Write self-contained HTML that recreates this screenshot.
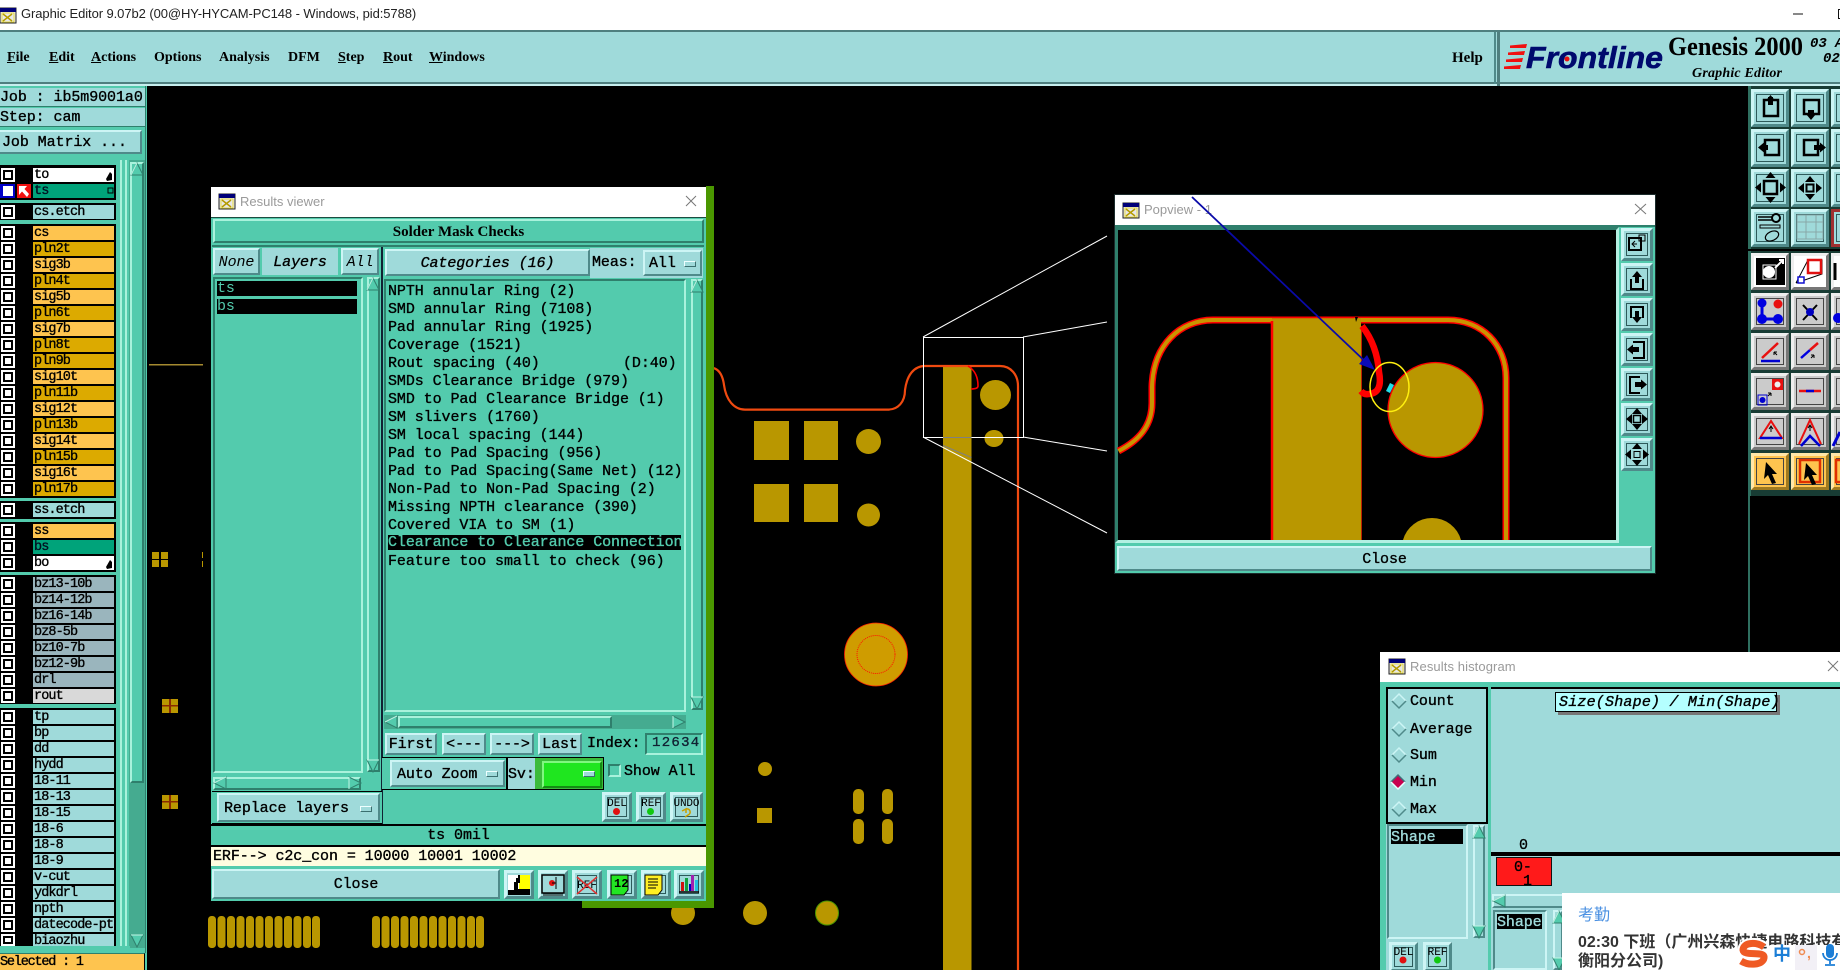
<!DOCTYPE html>
<html><head><meta charset="utf-8"><title>Graphic Editor</title>
<style>
html,body{margin:0;padding:0;background:#000;width:1840px;height:970px;overflow:hidden}
#p{position:relative;width:1840px;height:970px;overflow:hidden;background:#000}
#p div,#p svg{position:absolute;box-sizing:border-box}
svg{left:0;top:0}
.t,.n,.b,.f{font:15px/14px "Liberation Mono",monospace;letter-spacing:-.08px;white-space:pre;color:#000;-webkit-text-stroke:.35px}
.t{height:14px;padding-top:1px}
.nb{-webkit-text-stroke:0}
.i{font-style:italic}
.b,.f{display:flex;align-items:center;justify-content:center;padding-top:2px}
.b{background:#9fdada;border:2px solid;border-color:#cdf5f5 #4f8a8a #4f8a8a #cdf5f5}
.f{background:#9fdada}
.q{background:#53cbad;border:2px solid;border-color:#a9f2dc #2f7f6c #2f7f6c #a9f2dc}
.s{background:#53cbad;border:2px solid;border-color:#2f7f6c #a9f2dc #a9f2dc #2f7f6c}
.c{background:#53cbad}
.k{background:#000}
.m{font:bold 14px/16px "Liberation Serif",serif;color:#000;top:50px;height:16px;white-space:pre}
.w{font:13px/16px "Liberation Sans",sans-serif;color:#9a9a9a;height:16px;white-space:pre}
.n{position:absolute;left:33px;width:81px;height:14px;padding-left:1px;overflow:hidden;background:#9fdada;font:13.5px/15px "Liberation Mono",monospace;letter-spacing:-.9px;-webkit-text-stroke:.35px}
.h{position:absolute;left:1px;width:14px;height:14px;background:#fff;box-shadow:inset 0 0 0 2px #fff,inset 0 0 0 4px #000}
.o{background:#fec44f}.g{background:#dcaa00}.x{background:#9ab5bd}.y{background:#fff}.z{background:#00a37a}.l{background:#d9d9d9}
.d{width:12px;height:6px;background:#9fdada;border:1px solid;border-color:#eff #3b6f6f #3b6f6f #eff}
.ib{background:#9fdada;border:3px solid;border-color:#cdf5f5 #4f8a8a #4f8a8a #cdf5f5;box-shadow:inset 0 0 0 2px #9fdada,inset 0 0 0 3px #2d5a5a}
.ig{background:#cbcbcb;border:3px solid;border-color:#eee #777 #777 #eee;box-shadow:inset 0 0 0 2px #cbcbcb,inset 0 0 0 3px #444}
.io{background:#fec44f;border:3px solid;border-color:#ffe6a8 #a07a20 #a07a20 #ffe6a8;box-shadow:inset 0 0 0 2px #fec44f,inset 0 0 0 3px #444}
.iw{background:#fff;border:3px solid;border-color:#eee #777 #777 #eee}
</style></head><body><div id="p">

<!-- PCB -->
<svg width="1840" height="970" viewBox="0 0 1840 970">
<rect x="149" y="364" width="54" height="1.5" fill="#a58a30"/>
<g fill="#b99700">
<rect x="152" y="552" width="7" height="7"/><rect x="161" y="552" width="7" height="7"/><rect x="152" y="560" width="7" height="7"/><rect x="161" y="560" width="7" height="7"/>
<rect x="202" y="552" width="1" height="6"/><rect x="202" y="561" width="1" height="6"/>
<rect x="162" y="699" width="16" height="14"/><rect x="162" y="795" width="16" height="14"/>
<rect x="943" y="366" width="28.5" height="604"/>
<rect x="754" y="421" width="35" height="39"/><rect x="804" y="421" width="34" height="39"/>
<rect x="754" y="484" width="35" height="38"/><rect x="804" y="484" width="34" height="38"/>
<ellipse cx="868.5" cy="441.5" rx="12.5" ry="12.5"/><ellipse cx="868.5" cy="515" rx="11.5" ry="11.5"/>
<ellipse cx="995.5" cy="395" rx="15.5" ry="15"/><ellipse cx="994" cy="438.5" rx="9.5" ry="8.5"/>
<circle cx="765" cy="769" r="7"/><rect x="757" y="808" width="15" height="15"/>
<rect x="853" y="789" width="11" height="25" rx="5"/><rect x="853" y="819" width="11" height="25" rx="5"/>
<rect x="882" y="789" width="11" height="25" rx="5"/><rect x="882" y="819" width="11" height="25" rx="5"/>
<ellipse cx="755" cy="913" rx="12" ry="12"/><ellipse cx="683" cy="913" rx="12" ry="12"/>
<ellipse cx="827" cy="913" rx="11.5" ry="12" stroke="#4c9600"/>
<rect x="208" y="916" width="8" height="32" rx="3.5"/><rect x="217.5" y="916" width="8" height="32" rx="3.5"/><rect x="227" y="916" width="8" height="32" rx="3.5"/><rect x="236.5" y="916" width="8" height="32" rx="3.5"/><rect x="246" y="916" width="8" height="32" rx="3.5"/><rect x="255.5" y="916" width="8" height="32" rx="3.5"/><rect x="265" y="916" width="8" height="32" rx="3.5"/><rect x="274.5" y="916" width="8" height="32" rx="3.5"/><rect x="284" y="916" width="8" height="32" rx="3.5"/><rect x="293.5" y="916" width="8" height="32" rx="3.5"/><rect x="303" y="916" width="8" height="32" rx="3.5"/><rect x="312" y="916" width="8" height="32" rx="3.5"/>
<rect x="372" y="916" width="8" height="32" rx="3.5"/><rect x="381.5" y="916" width="8" height="32" rx="3.5"/><rect x="391" y="916" width="8" height="32" rx="3.5"/><rect x="400.5" y="916" width="8" height="32" rx="3.5"/><rect x="410" y="916" width="8" height="32" rx="3.5"/><rect x="419.5" y="916" width="8" height="32" rx="3.5"/><rect x="429" y="916" width="8" height="32" rx="3.5"/><rect x="438.5" y="916" width="8" height="32" rx="3.5"/><rect x="448" y="916" width="8" height="32" rx="3.5"/><rect x="457.5" y="916" width="8" height="32" rx="3.5"/><rect x="467" y="916" width="8" height="32" rx="3.5"/><rect x="476" y="916" width="8" height="32" rx="3.5"/>
</g>
<g fill="#8a2a00"><rect x="169" y="699" width="2" height="14"/><rect x="162" y="705" width="16" height="1.5"/><rect x="169" y="795" width="2" height="14"/><rect x="162" y="801" width="16" height="1.5"/></g>
<circle cx="876" cy="654.5" r="31.5" fill="#cf9c00" stroke="#ff2000" stroke-width=".8"/>
<circle cx="876" cy="654.5" r="19" fill="none" stroke="#ff1000" stroke-width="1" stroke-dasharray="1 1"/>
<path d="M713 368Q722 370 724 385C726 400 734 409.6 745 409.6L888 409.6C898 409.6 905 402 905 390C907 375 914 366 925 366L1000 366C1011 366 1018 375 1018 386L1018 970" fill="none" stroke="#f04a10" stroke-width="2.2"/>
<path d="M968 366Q978 372 978 386Q978 389 971 389" fill="none" stroke="#f00" stroke-width="1.6"/>
<g fill="none" stroke="#fff" stroke-width="1">
<rect x="923.5" y="337.5" width="100" height="100"/>
<path d="M923 337 1107 236M1023 337 1107 322M1023 437 1107 451M923 437 1107 533"/>
</g>
<path d="M943 437.500H971.500M943 445.500 971.500 457.500" stroke="#808080" fill="none"/>
</svg>

<!-- Title bar -->
<div style="left:0;top:0;width:1840px;height:31px;background:#fff"></div>
<div class="w" style="left:21px;top:6px;color:#222;letter-spacing:-.08px">Graphic Editor 9.07b2 (00@HY-HYCAM-PC148 - Windows, pid:5788)</div>

<!-- Menu -->
<div style="left:0;top:30px;width:1840px;height:56px;background:#9fdada;border-top:2px solid #4f7f7f"></div>
<div style="left:0;top:82px;width:1840px;height:2px;background:#4f7f7f"></div>
<div style="left:0;top:84px;width:1840px;height:2px;background:#c6eeee"></div>
<div class="m" style="left:7px"><u>F</u>ile</div>
<div class="m" style="left:49px"><u>E</u>dit</div>
<div class="m" style="left:91px"><u>A</u>ctions</div>
<div class="m" style="left:154px">Options</div>
<div class="m" style="left:219px">Analysis</div>
<div class="m" style="left:288px">DFM</div>
<div class="m" style="left:338px"><u>S</u>tep</div>
<div class="m" style="left:383px"><u>R</u>out</div>
<div class="m" style="left:429px"><u>W</u>indows</div>
<div class="m" style="left:1452px;font-size:15px">Help</div>
<div style="left:1494px;top:32px;width:2px;height:52px;background:#4f8a8a"></div>
<div style="left:1497px;top:32px;width:3px;height:54px;background:#4f7f7f"></div>

<!-- Left panel -->
<div class="c" style="left:0;top:86px;width:147px;height:884px"></div>
<div class="f" style="left:0;top:88px;width:145px;height:19px;justify-content:flex-start;border-bottom:1px solid #2f7f6c">Job : ib5m9001a0</div>
<div class="f" style="left:0;top:108px;width:145px;height:19px;justify-content:flex-start;border-bottom:1px solid #2f7f6c">Step: cam</div>
<div class="b" style="left:-2px;top:130px;width:144px;height:24px;justify-content:flex-start;padding-left:2px">Job Matrix ...</div>
<div style="left:145px;top:86px;width:1px;height:867px;background:#2f7f6c"></div>
<div style="left:120px;top:160px;width:2px;height:790px;background:#a9f2dc"></div>
<div style="left:125px;top:160px;width:2px;height:790px;background:#a9f2dc"></div>
<div style="left:129px;top:160px;width:16px;height:788px;background:#45ab90"></div>
<div class="q" style="left:130px;top:162px;width:14px;height:621px"></div>
<div class="k" style="left:0;top:165px;width:116px;height:35px"></div>
<div class="k" style="left:0;top:203px;width:116px;height:17px"></div>
<div class="k" style="left:0;top:224px;width:116px;height:274px"></div>
<div class="k" style="left:0;top:501px;width:116px;height:18px"></div>
<div class="k" style="left:0;top:522px;width:116px;height:50px"></div>
<div class="k" style="left:0;top:575px;width:116px;height:129px"></div>
<div class="k" style="left:0;top:708px;width:116px;height:238px"></div>

<div class="h" style="top:168px"></div><div class="n y" style="top:168px">to</div>
<div style="left:0;top:184px;width:15px;height:14px;background:#0000c8"></div><div class="h" style="left:3px;top:186px;width:10px;height:10px;box-shadow:inset 0 0 0 2px #fff,inset 0 0 0 2px #000"></div>
<div style="left:17px;top:184px;width:14px;height:14px;background:#f01010"></div>
<div class="n z" style="top:184px;color:#012">ts</div>
<div class="h" style="top:205px"></div><div class="n" style="top:205px">cs.etch</div>
<div class="h" style="top:226px"></div><div class="n o" style="top:226px">cs</div>
<div class="h" style="top:242px"></div><div class="n g" style="top:242px">pln2t</div>
<div class="h" style="top:258px"></div><div class="n o" style="top:258px">sig3b</div>
<div class="h" style="top:274px"></div><div class="n g" style="top:274px">pln4t</div>
<div class="h" style="top:290px"></div><div class="n o" style="top:290px">sig5b</div>
<div class="h" style="top:306px"></div><div class="n g" style="top:306px">pln6t</div>
<div class="h" style="top:322px"></div><div class="n o" style="top:322px">sig7b</div>
<div class="h" style="top:338px"></div><div class="n g" style="top:338px">pln8t</div>
<div class="h" style="top:354px"></div><div class="n g" style="top:354px">pln9b</div>
<div class="h" style="top:370px"></div><div class="n o" style="top:370px">sig10t</div>
<div class="h" style="top:386px"></div><div class="n g" style="top:386px">pln11b</div>
<div class="h" style="top:402px"></div><div class="n o" style="top:402px">sig12t</div>
<div class="h" style="top:418px"></div><div class="n g" style="top:418px">pln13b</div>
<div class="h" style="top:434px"></div><div class="n o" style="top:434px">sig14t</div>
<div class="h" style="top:450px"></div><div class="n g" style="top:450px">pln15b</div>
<div class="h" style="top:466px"></div><div class="n o" style="top:466px">sig16t</div>
<div class="h" style="top:482px"></div><div class="n g" style="top:482px">pln17b</div>
<div class="h" style="top:503px"></div><div class="n" style="top:503px">ss.etch</div>
<div class="h" style="top:524px"></div><div class="n o" style="top:524px">ss</div>
<div class="h" style="top:540px"></div><div class="n z" style="top:540px;color:#012">bs</div>
<div class="h" style="top:556px"></div><div class="n y" style="top:556px">bo</div>
<div class="h" style="top:577px"></div><div class="n x" style="top:577px">bz13-10b</div>
<div class="h" style="top:593px"></div><div class="n x" style="top:593px">bz14-12b</div>
<div class="h" style="top:609px"></div><div class="n x" style="top:609px">bz16-14b</div>
<div class="h" style="top:625px"></div><div class="n x" style="top:625px">bz8-5b</div>
<div class="h" style="top:641px"></div><div class="n x" style="top:641px">bz10-7b</div>
<div class="h" style="top:657px"></div><div class="n x" style="top:657px">bz12-9b</div>
<div class="h" style="top:673px"></div><div class="n x" style="top:673px">drl</div>
<div class="h" style="top:689px"></div><div class="n l" style="top:689px">rout</div>
<div class="h" style="top:710px"></div><div class="n" style="top:710px">tp</div>
<div class="h" style="top:726px"></div><div class="n" style="top:726px">bp</div>
<div class="h" style="top:742px"></div><div class="n" style="top:742px">dd</div>
<div class="h" style="top:758px"></div><div class="n" style="top:758px">hydd</div>
<div class="h" style="top:774px"></div><div class="n" style="top:774px">18-11</div>
<div class="h" style="top:790px"></div><div class="n" style="top:790px">18-13</div>
<div class="h" style="top:806px"></div><div class="n" style="top:806px">18-15</div>
<div class="h" style="top:822px"></div><div class="n" style="top:822px">18-6</div>
<div class="h" style="top:838px"></div><div class="n" style="top:838px">18-8</div>
<div class="h" style="top:854px"></div><div class="n" style="top:854px">18-9</div>
<div class="h" style="top:870px"></div><div class="n" style="top:870px">v-cut</div>
<div class="h" style="top:886px"></div><div class="n" style="top:886px">ydkdrl</div>
<div class="h" style="top:902px"></div><div class="n" style="top:902px">npth</div>
<div class="h" style="top:918px"></div><div class="n" style="top:918px">datecode-ptc</div>
<div class="h" style="top:934px;height:12px"></div><div class="n" style="top:934px;height:12px">biaozhu</div>
<div class="c" style="left:0;top:946px;width:130px;height:7px"></div>
<div class="f" style="left:0;top:953px;width:145px;height:17px;justify-content:flex-start;background:#fec44f;border-right:1px solid #000;border-top:1px solid #2f7f6c;font-size:13.5px;letter-spacing:-1.2px">Selected : 1</div>

<!-- Results viewer -->
<div style="left:706px;top:186px;width:8px;height:722px;background:#4a9700"></div>
<div style="left:582px;top:900px;width:132px;height:8px;background:#4a9700"></div>
<div style="left:211px;top:187px;width:495px;height:30px;background:#fff"></div>
<div class="w" style="left:240px;top:194px">Results viewer</div>
<div class="c" style="left:211px;top:217px;width:495px;height:684px;border-top:1px solid #1d4d40"></div>
<div class="q" style="left:213px;top:219px;width:491px;height:24px"></div>
<div style="left:213px;top:224px;width:491px;height:16px;text-align:center;font:bold 15px/16px 'Liberation Serif',serif">Solder Mask Checks</div>
<div style="left:212px;top:245px;width:492px;height:2px;background:#2f7f6c"></div>
<div class="b i nb" style="left:213px;top:248px;width:47px;height:27px">None</div>
<div class="f i" style="left:262px;top:248px;width:76px;height:27px">Layers</div>
<div class="b i nb" style="left:341px;top:248px;width:38px;height:27px">All</div>
<div style="left:381px;top:247px;width:2px;height:578px;background:#123"></div>
<div class="f" style="left:590px;top:248px;width:113px;height:30px"></div>
<div class="b i" style="left:385px;top:249px;width:205px;height:27px">Categories (16)</div>
<div class="t" style="left:592px;top:255px">Meas:</div>
<div class="b" style="left:643px;top:250px;width:59px;height:26px;justify-content:flex-start;padding-left:4px">All</div>
<div class="d" style="left:684px;top:261px"></div>

<div class="s" style="left:213px;top:277px;width:150px;height:496px"></div>
<div class="k t nb" style="left:217px;top:281px;width:140px;height:15px;line-height:15px;padding:0;color:#53cbad">ts</div>
<div class="k t nb" style="left:217px;top:299px;width:140px;height:15px;line-height:15px;padding:0;color:#53cbad">bs</div>
<div class="q" style="left:367px;top:277px;width:13px;height:495px"></div>
<div class="q" style="left:213px;top:777px;width:148px;height:13px"></div>
<div style="left:212px;top:791px;width:170px;height:34px;border-top:1px solid #000;border-bottom:2px solid #000;background:#53cbad"></div>
<div class="b" style="left:217px;top:793px;width:163px;height:29px;justify-content:flex-start;padding-left:5px">Replace layers</div>
<div class="d" style="left:360px;top:806px"></div>

<div class="s" style="left:384px;top:279px;width:302px;height:433px"></div>
<div class="t" style="left:388px;top:284px">NPTH annular Ring (2)</div>
<div class="t" style="left:388px;top:302px">SMD annular Ring (7108)</div>
<div class="t" style="left:388px;top:320px">Pad annular Ring (1925)</div>
<div class="t" style="left:388px;top:338px">Coverage (1521)</div>
<div class="t" style="left:388px;top:356px">Rout spacing (40)</div>
<div class="t" style="left:623px;top:356px">(D:40)</div>
<div class="t" style="left:388px;top:374px">SMDs Clearance Bridge (979)</div>
<div class="t" style="left:388px;top:392px">SMD to Pad Clearance Bridge (1)</div>
<div class="t" style="left:388px;top:410px">SM slivers (1760)</div>
<div class="t" style="left:388px;top:428px">SM local spacing (144)</div>
<div class="t" style="left:388px;top:446px">Pad to Pad Spacing (956)</div>
<div class="t" style="left:388px;top:464px">Pad to Pad Spacing(Same Net) (12)</div>
<div class="t" style="left:388px;top:482px">Non-Pad to Non-Pad Spacing (2)</div>
<div class="t" style="left:388px;top:500px">Missing NPTH clearance (390)</div>
<div class="t" style="left:388px;top:518px">Covered VIA to SM (1)</div>
<div class="k t" style="left:388px;top:535px;width:293px;height:15px;line-height:15px;padding-top:0;color:#53cbad;overflow:hidden">Clearance to Clearance Connection</div>
<div class="t" style="left:388px;top:554px">Feature too small to check (96)</div>
<div class="q" style="left:691px;top:279px;width:12px;height:431px"></div>
<div style="left:384px;top:715px;width:302px;height:14px;background:#45ab90"></div>
<div class="q" style="left:398px;top:716px;width:214px;height:12px"></div>

<div class="b" style="left:385px;top:733px;width:52px;height:22px">First</div>
<div class="b" style="left:442px;top:733px;width:44px;height:22px">&lt;---</div>
<div class="b" style="left:490px;top:733px;width:44px;height:22px">---&gt;</div>
<div class="b" style="left:538px;top:733px;width:44px;height:22px">Last</div>
<div class="t" style="left:587px;top:736px">Index:</div>
<div class="s" style="left:645px;top:733px;width:58px;height:22px"></div>
<div class="t" style="left:652px;top:735px;letter-spacing:1.3px;font-size:14px;color:#123">12634</div>
<div style="left:382px;top:757px;width:222px;height:33px;border:1px solid #000;border-left:0;background:#53cbad"></div>
<div class="b" style="left:390px;top:760px;width:115px;height:27px;justify-content:flex-start;padding-left:5px">Auto Zoom</div>
<div class="d" style="left:486px;top:771px"></div>
<div style="left:506px;top:757px;width:2px;height:33px;background:#000"></div>
<div class="f" style="left:508px;top:758px;width:27px;height:31px;justify-content:flex-start">Sv:</div>
<div style="left:535px;top:758px;width:68px;height:31px;background:#3bbb3b"></div>
<div style="left:542px;top:761px;width:60px;height:27px;background:#1fe61f;border:2px solid;border-color:#7ff77f #148c14 #148c14 #7ff77f"></div>
<div class="d" style="left:583px;top:771px"></div>
<div class="s" style="left:608px;top:764px;width:13px;height:13px"></div>
<div class="t" style="left:624px;top:764px">Show All</div>
<div class="ib" style="left:602px;top:792px;width:30px;height:30px"></div>
<div class="ib" style="left:636px;top:792px;width:30px;height:30px"></div>
<div class="ib" style="left:670px;top:792px;width:33px;height:30px"></div>
<div style="left:384px;top:824px;width:322px;height:2px;background:#000"></div>
<div style="left:211px;top:824px;width:173px;height:2px;background:#000"></div>
<div class="t" style="left:211px;top:828px;width:495px;text-align:center">ts 0mil</div>
<div style="left:211px;top:845px;width:495px;height:2px;background:#000"></div>
<div class="t" style="left:211px;top:847px;width:495px;height:19px;line-height:18px;background:#fffde0;padding-left:2px">ERF--&gt; c2c_con = 10000 10001 10002</div>
<div class="b" style="left:212px;top:869px;width:288px;height:30px">Close</div>
<div class="ib" style="left:504px;top:870px;width:30px;height:29px"></div>
<div class="ib" style="left:538px;top:870px;width:30px;height:29px"></div>
<div class="ib" style="left:572px;top:870px;width:30px;height:29px"></div>
<div class="ib" style="left:607px;top:870px;width:30px;height:29px"></div>
<div class="ib" style="left:641px;top:870px;width:30px;height:29px"></div>
<div class="ib" style="left:674px;top:870px;width:30px;height:29px"></div>

<!-- Popview -->
<div style="left:1114px;top:194px;width:542px;height:380px;background:#53cbad;border:1px solid #1b2b2b"></div>
<div style="left:1115px;top:195px;width:540px;height:30px;background:#fff"></div>
<div class="w" style="left:1144px;top:202px">Popview - 1</div>
<div style="left:1115px;top:225px;width:540px;height:2px;background:#2f7f6c"></div>
<div style="left:1115px;top:227px;width:504px;height:316px;background:#000;border:3px solid;border-color:#2f7f6c #b3f0e2 #b3f0e2 #2f7f6c"></div>
<div class="ib" style="left:1621px;top:228px;width:32px;height:33px"></div>
<div class="ib" style="left:1621px;top:263px;width:32px;height:33px"></div>
<div class="ib" style="left:1621px;top:298px;width:32px;height:33px"></div>
<div class="ib" style="left:1621px;top:333px;width:32px;height:33px"></div>
<div class="ib" style="left:1621px;top:368px;width:32px;height:33px"></div>
<div class="ib" style="left:1621px;top:403px;width:32px;height:33px"></div>
<div class="ib" style="left:1621px;top:438px;width:32px;height:33px"></div>
<div class="b" style="left:1117px;top:546px;width:535px;height:25px">Close</div>

<!-- Right toolbar -->
<div style="left:1748px;top:86px;width:92px;height:410px;background:#183c34;border-left:3px solid #2f6f60"></div>
<div style="left:1748px;top:496px;width:2px;height:156px;background:#2f6f60"></div>
<div class="ib" style="left:1751px;top:89px;width:38px;height:38px"></div><div class="ib" style="left:1791px;top:89px;width:38px;height:38px"></div><div class="ib" style="left:1831px;top:89px;width:38px;height:38px"></div>
<div class="ib" style="left:1751px;top:129px;width:38px;height:38px"></div><div class="ib" style="left:1791px;top:129px;width:38px;height:38px"></div><div class="ib" style="left:1831px;top:129px;width:38px;height:38px"></div>
<div class="ib" style="left:1751px;top:169px;width:38px;height:38px"></div><div class="ib" style="left:1791px;top:169px;width:38px;height:38px"></div><div class="ib" style="left:1831px;top:169px;width:38px;height:38px"></div>
<div class="ib" style="left:1751px;top:209px;width:38px;height:38px"></div><div class="ib" style="left:1791px;top:209px;width:38px;height:38px"></div><div class="ib" style="left:1831px;top:209px;width:38px;height:38px;border-color:#a03030"></div>
<div style="left:1748px;top:249px;width:92px;height:2px;background:#000"></div>
<div class="iw" style="left:1751px;top:253px;width:38px;height:37px"></div><div class="iw" style="left:1791px;top:253px;width:38px;height:37px"></div><div class="iw" style="left:1831px;top:253px;width:38px;height:37px"></div>
<div class="ig" style="left:1751px;top:293px;width:38px;height:37px"></div><div class="ig" style="left:1791px;top:293px;width:38px;height:37px"></div><div class="ig" style="left:1831px;top:293px;width:38px;height:37px"></div>
<div class="ig" style="left:1751px;top:333px;width:38px;height:37px"></div><div class="ig" style="left:1791px;top:333px;width:38px;height:37px"></div><div class="ig" style="left:1831px;top:333px;width:38px;height:37px"></div>
<div class="ig" style="left:1751px;top:373px;width:38px;height:37px"></div><div class="ig" style="left:1791px;top:373px;width:38px;height:37px"></div><div class="ig" style="left:1831px;top:373px;width:38px;height:37px"></div>
<div class="ig" style="left:1751px;top:413px;width:38px;height:37px"></div><div class="ig" style="left:1791px;top:413px;width:38px;height:37px"></div><div class="ig" style="left:1831px;top:413px;width:38px;height:37px"></div>
<div class="io" style="left:1751px;top:453px;width:38px;height:37px"></div><div class="io" style="left:1791px;top:453px;width:38px;height:37px"></div><div class="io" style="left:1831px;top:453px;width:38px;height:37px"></div>

<!-- Results histogram -->
<div class="c" style="left:1380px;top:652px;width:460px;height:318px"></div>
<div style="left:1380px;top:652px;width:460px;height:30px;background:#fff"></div>
<div class="w" style="left:1410px;top:659px;letter-spacing:.1px">Results histogram</div>
<div style="left:1386px;top:687px;width:102px;height:137px;background:#9fdada;border:2px solid #000"></div>
<div class="t" style="left:1410px;top:694px">Count</div>
<div class="t" style="left:1410px;top:722px">Average</div>
<div class="t" style="left:1410px;top:748px">Sum</div>
<div class="t" style="left:1410px;top:775px">Min</div>
<div class="t" style="left:1410px;top:802px">Max</div>
<div style="left:1386px;top:824px;width:102px;height:146px;background:#9fdada"></div>
<div style="left:1387px;top:824px;width:81px;height:115px;background:#9fdada;border:2px solid;border-color:#4f8a8a #cdf5f5 #cdf5f5 #4f8a8a"></div>
<div class="k t" style="left:1391px;top:829px;width:72px;height:15px;line-height:15px;color:#9fdada">Shape</div>
<div class="b" style="left:1473px;top:825px;width:12px;height:113px"></div>
<div class="ib" style="left:1389px;top:942px;width:29px;height:30px"></div>
<div class="ib" style="left:1423px;top:942px;width:29px;height:30px"></div>
<div style="left:1491px;top:687px;width:349px;height:283px;background:#9fdada;border-top:2px solid #000"></div>
<div style="left:1558px;top:695px;width:222px;height:20px;background:#777"></div>
<div class="t i" style="left:1555px;top:692px;width:222px;height:20px;line-height:20px;padding-top:0;background:#b4ffff;border:1px solid #000;padding-left:3px;letter-spacing:.2px">Size(Shape) / Min(Shape)</div>
<div class="t" style="left:1519px;top:838px">0</div>
<div class="k" style="left:1491px;top:852px;width:349px;height:4px"></div>
<div style="left:1496px;top:857px;width:56px;height:29px;background:#ff1a1a;border:1px solid #111"></div>
<div class="t" style="left:1514px;top:860px">0-</div>
<div class="t" style="left:1523px;top:874px">1</div>
<div class="b" style="left:1492px;top:894px;width:80px;height:14px"></div>
<div style="left:1493px;top:910px;width:54px;height:60px;background:#9fdada;border:2px solid;border-color:#4f8a8a #cdf5f5 #cdf5f5 #4f8a8a"></div>
<div class="k t" style="left:1497px;top:914px;width:45px;height:15px;line-height:15px;color:#9fdada">Shape</div>
<div class="b" style="left:1553px;top:910px;width:10px;height:60px"></div>

<!-- Overlay icons and popview artwork -->
<svg width="1840" height="970" viewBox="0 0 1840 970">
<defs>
<g id="u"><path d="M0 12 6 0 12 12Z" fill="#53cbad" stroke="#2f7f6c"/><path d="M0 12 6 0" stroke="#c0f5e5" fill="none"/></g>
<g id="v"><path d="M0 0H12L6 12Z" fill="#53cbad" stroke="#2f7f6c"/><path d="M0 0H12" stroke="#c0f5e5" fill="none"/></g>
<g id="l"><path d="M12 0V12L0 6Z" fill="#53cbad" stroke="#2f7f6c"/><path d="M12 0 0 6" stroke="#c0f5e5" fill="none"/></g>
<g id="r"><path d="M0 0V12L12 6Z" fill="#53cbad" stroke="#2f7f6c"/><path d="M0 0V12" stroke="#c0f5e5" fill="none"/></g>
<g id="win"><rect width="16" height="15" fill="#e8e8e8" stroke="#222"/><rect width="16" height="4" fill="#000078"/><path d="M3 6 12 13M12 6 3 13" stroke="#b59b00" stroke-width="1.5"/><rect x="2" y="5" width="12" height="9" fill="none" stroke="#e8d800" stroke-width=".7"/></g>
<path id="ta" d="M-5 0 0-6 5 0Z"/><path id="tb" d="M-5 0 0 6 5 0Z"/><path id="tc" d="M0-5-6 0 0 5Z"/><path id="td" d="M0-5 6 0 0 5Z"/>
<path id="cur" d="M0 0 11 12 6 12 10 21 6 22 2 13-2 17Z"/>
</defs>

<!-- window icons and close glyphs -->
<use href="#win" x="219" y="194"/><use href="#win" x="1123" y="203"/><use href="#win" x="1389" y="659"/>
<use href="#win" x="0" y="8"/>
<g stroke="#777" stroke-width="1" fill="none"><path d="M686 196 696 206M696 196 686 206M1635 204 1646 214M1646 204 1635 214M1828 661 1838 671M1838 661 1828 671"/></g>
<path d="M1793 14H1803" stroke="#111" stroke-width="1"/><rect x="1838.5" y="9.5" width="9" height="9" fill="none" stroke="#111"/>

<!-- Logo -->
<g fill="#f01010"><path d="M1510 45.500 1527 44 1526 48 1510 48ZM1508 52.500 1525 51 1524 55 1508 55ZM1506 59.500 1523 58 1522 62 1506 62ZM1504 66.500 1521 65 1520 69 1504 69Z"/></g>
<text x="1526" y="68" font-family="Liberation Sans" font-style="italic" font-weight="bold" font-size="31" fill="#000a6e" stroke="#000a6e" stroke-width=".6" textLength="137" lengthAdjust="spacingAndGlyphs">Frontline</text>
<circle cx="1567" cy="59" r="2.5" fill="#e81010"/>
<text x="1668" y="55" font-family="Liberation Serif" font-weight="bold" font-size="26" fill="#000" textLength="135" lengthAdjust="spacingAndGlyphs">Genesis 2000</text>
<text x="1692" y="77" font-family="Liberation Serif" font-style="italic" font-weight="bold" font-size="14" fill="#000" textLength="90">Graphic Editor</text>
<g font-family="Liberation Mono" font-style="italic" font-weight="bold" font-size="14" fill="#000"><text x="1810" y="47">03</text><text x="1835" y="47">A</text><text x="1823" y="62">02</text></g>

<!-- scroll arrows -->
<use href="#u" x="131" y="163"/><use href="#v" x="131" y="935"/>
<use href="#u" x="367" y="278"/><use href="#v" x="367" y="760"/>
<use href="#l" x="214" y="777"/><use href="#r" x="349" y="777"/>
<use href="#u" x="691" y="280"/><use href="#v" x="691" y="697"/>
<use href="#l" x="385" y="716"/><use href="#r" x="673" y="716"/>
<use href="#u" x="1473" y="826"/><use href="#v" x="1473" y="926"/>
<use href="#l" x="1493" y="895"/>
<use href="#u" x="1553" y="911"/><use href="#v" x="1553" y="958"/>

<!-- layer row details -->
<path d="M19 186H27L24.500 189 29 194 27 197 22 191.500 19 195Z" fill="#fff"/>
<rect x="108" y="188" width="5" height="5" fill="none" stroke="#000"/>
<path d="M106 179 110 172 112 174 112 180 107 181Z" fill="#000"/><path d="M106 567 110 560 112 562 112 568 107 569Z" fill="#000"/>

<!-- DEL REF UNDO -->
<g font-family="Liberation Mono" font-size="11" fill="#000" text-anchor="middle">
<text x="617" y="806">DEL</text><text x="651" y="806">REF</text><text x="686.500" y="806" textLength="26">UNDO</text>
<text x="1403.500" y="955">DEL</text><text x="1437.500" y="955">REF</text>
<text x="587" y="888" font-size="11">REF</text>
</g>
<circle cx="616.500" cy="811.500" r="3.500" fill="#e01010"/><circle cx="650.500" cy="811.500" r="3.500" fill="#10c810"/>
<path d="M686 809 A3 3 0 1 1 688 815 L685 817M682 811 686 809 686 813" fill="none" stroke="#c9a000" stroke-width="1.500"/>
<circle cx="1403" cy="960" r="3.500" fill="#e01010"/><circle cx="1437.500" cy="960" r="3.500" fill="#10c810"/>

<!-- bottom icons of results window -->
<rect x="508" y="875" width="22" height="20" fill="#fff"/><rect x="519" y="875" width="11" height="15" fill="#ffff00"/><path d="M508 895V890H514V882H516V878H518V875H520V883H518V889H530V895Z" fill="#000"/>
<rect x="542" y="875" width="22" height="18" fill="#9fdada" stroke="#000" stroke-width="1.500"/><circle cx="552" cy="883" r="3" fill="#e01010"/><path d="M556 877V889M552 883H556" stroke="#000"/><path d="M543 895H563" stroke="#000"/>
<path d="M577 877 597 894M597 877 577 894" stroke="#e03030" stroke-width="1.500"/>
<path d="M611 875H628V890L624 895H611Z" fill="#22e622" stroke="#000"/><text x="614" y="887" font-family="Liberation Mono" font-weight="bold" font-size="12" fill="#000">12</text>
<path d="M645 875H662V890L658 895H645Z" fill="#ffef22" stroke="#000"/><path d="M648 879H658M648 882H658M648 885H658M648 888H656" stroke="#000"/>
<path d="M679 892H699" stroke="#000" stroke-width="1.500"/><rect x="681" y="882" width="3" height="9" fill="#d01010"/><rect x="685" y="878" width="3" height="13" fill="#10a040"/><rect x="689" y="884" width="2" height="7" fill="#0000c0"/><rect x="691" y="875" width="3" height="16" fill="#a020b0"/><rect x="695" y="880" width="3" height="11" fill="#20c0e0"/>

<!-- popview PCB -->
<g>
<path d="M1118.500 451 C1140 440 1152 425 1152 403 L1152 387 C1153 345 1180 320 1213 320 L1448 320 C1482 320 1506 345 1506 378 L1506 540" fill="none" stroke="#f00" stroke-width="7"/>
<path d="M1118.500 451 C1140 440 1152 425 1152 403 L1152 387 C1153 345 1180 320 1213 320 L1448 320 C1482 320 1506 345 1506 378 L1506 540" fill="none" stroke="#c99400" stroke-width="4"/>
<rect x="1272" y="318" width="89" height="222" fill="#b99700"/>
<path d="M1272 540V321" stroke="#f00" stroke-width="2.500"/><path d="M1361.500 326V540" stroke="#c02000" stroke-width="1"/>
<path d="M1272 317.500H1354" stroke="#f00" stroke-width="1.500"/>
<path d="M1355 317 1356 322 1358 317Z" fill="#000"/>
<path d="M1362 326Q1377 345 1379 372 1383 393 1369 394 1364 395 1361 391" fill="none" stroke="#f00" stroke-width="6.500"/>
<circle cx="1435.500" cy="410" r="47.500" fill="#b99700" stroke="#f00" stroke-width="1.300"/>
<path d="M1403 540A30.100 30.100 0 0 1 1461 540Z" fill="#b99700"/>
<path d="M1192 197 1370 366" stroke="#0a0aa8" stroke-width="1.800"/>
<path d="M1375 370 1359 364 1367 355Z" fill="#0a0ab8"/>
<ellipse cx="1389.500" cy="387" rx="19.500" ry="24.500" fill="none" stroke="#ffef10" stroke-width="1.500"/>
<path d="M1390 383 1394 385 1390 393 1386 391Z" fill="#20e0ea"/>
</g>

<!-- popview buttons -->
<g fill="#000" stroke="none">
<g fill="none" stroke="#000" stroke-width="1.500"><rect x="1629" y="238" width="12" height="12" stroke-width="2"/><rect x="1639" y="235" width="6" height="6" stroke-width="1"/></g><path d="M1632 244H1637M1635 241 1632 244 1635 247" stroke="#000" fill="none"/>
<g fill="none" stroke="#000" stroke-width="2"><path d="M1631 279V289H1643V279"/></g><rect x="1635" y="276" width="4" height="7"/><use href="#ta" x="1637" y="277"/>
<g fill="none" stroke="#000" stroke-width="2"><path d="M1631 318V307H1643V318"/></g><rect x="1635" y="311" width="4" height="7"/><use href="#tb" x="1637" y="317"/>
<g fill="none" stroke="#000" stroke-width="2"><path d="M1633 342H1644V358H1633"/></g><rect x="1633" y="347" width="6" height="5"/><use href="#tc" x="1633" y="349.500"/>
<g fill="none" stroke="#000" stroke-width="2"><path d="M1640 377H1630V393H1640"/></g><rect x="1635" y="382" width="6" height="5"/><use href="#td" x="1641" y="384.500"/>
<rect x="1633.500" y="415.500" width="7" height="7" fill="none" stroke="#000" stroke-width="1.500"/><use href="#ta" x="1637" y="414"/><use href="#tb" x="1637" y="424"/><use href="#tc" x="1632" y="419"/><use href="#td" x="1642" y="419"/>
<rect x="1634" y="451.500" width="6" height="6" fill="none" stroke="#000"/><use href="#ta" x="1637" y="449"/><use href="#tb" x="1637" y="460"/><use href="#tc" x="1631" y="454.500"/><use href="#td" x="1643" y="454.500"/>
</g>

<!-- toolbar icons -->
<g fill="#000">
<rect x="1764" y="100" width="14" height="16" fill="none" stroke="#000" stroke-width="2.500"/><rect x="1768" y="97" width="5" height="8"/><use href="#ta" x="1770.500" y="101"/>
<rect x="1804" y="100" width="15" height="14" fill="none" stroke="#000" stroke-width="2.500"/><rect x="1808" y="110" width="6" height="6"/><use href="#tb" x="1811" y="114"/>
<rect x="1765" y="140" width="14" height="15" fill="none" stroke="#000" stroke-width="2.500"/><rect x="1762" y="145" width="6" height="5"/><use href="#tc" x="1764" y="147.500"/>
<rect x="1804" y="140" width="14" height="15" fill="none" stroke="#000" stroke-width="2.500"/><rect x="1814" y="145" width="6" height="5"/><use href="#td" x="1820" y="147.500"/>
<rect x="1764" y="181" width="13" height="13" fill="none" stroke="#000" stroke-width="2.500"/><use href="#ta" x="1770.500" y="178"/><use href="#tb" x="1770.500" y="197"/><use href="#tc" x="1761" y="187.500"/><use href="#td" x="1780" y="187.500"/>
<rect x="1806.500" y="184.500" width="7" height="7" fill="none" stroke="#000" stroke-width="2"/><use href="#ta" x="1810" y="182"/><use href="#tb" x="1810" y="194"/><use href="#tc" x="1804" y="188"/><use href="#td" x="1816" y="188"/>
<path d="M1758 217H1773M1758 220H1773" stroke="#000" stroke-width="1.500"/><circle cx="1776" cy="218" r="4" fill="none" stroke="#000" stroke-width="2"/><path d="M1760 225H1780V228H1760Z" fill="none" stroke="#000"/><ellipse cx="1772" cy="236" rx="7" ry="4.500" fill="none" stroke="#000" stroke-width="1.200" transform="rotate(-25 1772 236)"/>
<path d="M1797 222H1823M1797 232H1823M1806 215V239M1816 215V239" stroke="#88a8a8" stroke-width="1"/><rect x="1797" y="215" width="26" height="24" fill="none" stroke="#88a8a8"/>
<rect x="1756" y="258" width="29" height="27"/><circle cx="1769" cy="272" r="6" fill="#fff"/><path d="M1775 268 1783 260M1779 260H1783V264" stroke="#fff" stroke-width="2" fill="none"/><rect x="1763" y="265" width="13" height="14" fill="none" stroke="#fff"/>
<path d="M1796 283 1808 260H1822V274L1796 283" fill="none" stroke="#000"/><rect x="1808" y="260" width="13" height="13" fill="#fff" stroke="#e01010" stroke-width="2.500"/><rect x="1798" y="277" width="6" height="6" fill="#fff" stroke="#1010d0" stroke-width="1.500"/>
<path d="M1835 263 1835 280" stroke="#000" stroke-width="3"/>
</g>
<g>
<path d="M1762 303V319H1778" fill="none" stroke="#0000e0" stroke-width="3"/><circle cx="1762" cy="303" r="4.500" fill="#0000e0"/><circle cx="1762" cy="319" r="5" fill="#0000e0"/><circle cx="1778" cy="319" r="5" fill="#0000e0"/><circle cx="1778" cy="304" r="4.500" fill="#e81010"/>
<path d="M1803 305 1817 320M1817 305 1803 320" stroke="#000" stroke-width="2"/><circle cx="1810" cy="312" r="4" fill="#0000c0"/>
<circle cx="1838" cy="318" r="5" fill="#0000e0"/>
<path d="M1762 358 1778 343" stroke="#e81010" stroke-width="2.500"/><path d="M1761 361H1780" stroke="#0000d0" stroke-width="2.500"/><path d="M1774 352 1777 355M1774 352V355M1774 352H1777" stroke="#000" fill="none"/>
<path d="M1801 358 1810 350" stroke="#0000e0" stroke-width="2.500"/><path d="M1810 350 1818 343" stroke="#e81010" stroke-width="2.500"/><path d="M1814 355 1811 358M1814 355V358M1814 355H1811" stroke="#000" fill="none"/>
<rect x="1758" y="395" width="9" height="10" fill="none" stroke="#0000d0" stroke-width="1"/><circle cx="1762.500" cy="400" r="3" fill="#0000d0"/><rect x="1772" y="379" width="11" height="11" fill="#e81010"/><circle cx="1777.500" cy="384.500" r="3" fill="#eee"/><path d="M1768 396 1771 393M1771 393V396M1771 393H1768" stroke="#000" fill="none"/>
<path d="M1799 391H1821" stroke="#e81010" stroke-width="2.500"/><path d="M1806 391H1814" stroke="#0000d0" stroke-width="2.500"/>
<path d="M1760 438 1771 421 1782 438Z" fill="none" stroke="#e81010" stroke-width="2"/><path d="M1760 438H1782" stroke="#0000d0" stroke-width="2.500"/><path d="M1771 427V432M1769 429 1771 426 1773 429" stroke="#000" fill="none"/>
<path d="M1799 444 1810 420 1821 444" fill="none" stroke="#e81010" stroke-width="2"/><path d="M1801 446 1810 436 1820 446" fill="none" stroke="#0000d0" stroke-width="2.500"/><path d="M1810 426V431M1808 428 1810 425 1812 428" stroke="#000" fill="none"/>
<path d="M1833 446 1840 432" stroke="#0000d0" stroke-width="3"/>
<use href="#cur" x="1766" y="462"/>
<rect x="1800" y="460" width="20" height="22" fill="none" stroke="#e03000" stroke-width="2.500"/><use href="#cur" x="1806" y="463"/>
<rect x="1836" y="460" width="8" height="22" fill="none" stroke="#e03000" stroke-width="2.500"/>
</g>

<!-- histogram radios -->
<g stroke-width="1.500">
<path d="M1399 694 1406 701 1399 708 1392 701Z" fill="#9fdada"/><path d="M1392 701 1399 694 1406 701" fill="none" stroke="#cdf5f5"/><path d="M1392 701 1399 708 1406 701" fill="none" stroke="#4f8a8a"/>
<path d="M1399 722 1406 729 1399 736 1392 729Z" fill="#9fdada"/><path d="M1392 729 1399 722 1406 729" fill="none" stroke="#cdf5f5"/><path d="M1392 729 1399 736 1406 729" fill="none" stroke="#4f8a8a"/>
<path d="M1399 748 1406 755 1399 762 1392 755Z" fill="#9fdada"/><path d="M1392 755 1399 748 1406 755" fill="none" stroke="#cdf5f5"/><path d="M1392 755 1399 762 1406 755" fill="none" stroke="#4f8a8a"/>
<path d="M1398 775 1405 782 1398 789 1391 782Z" fill="#c8004f"/><path d="M1391 782 1398 775 1405 782" fill="none" stroke="#40707a"/><path d="M1391 782 1398 789 1405 782" fill="none" stroke="#e8ffff"/>
<path d="M1399 802 1406 809 1399 816 1392 809Z" fill="#9fdada"/><path d="M1392 809 1399 802 1406 809" fill="none" stroke="#cdf5f5"/><path d="M1392 809 1399 816 1406 809" fill="none" stroke="#4f8a8a"/>
</g>
</svg>

<!-- Notification -->
<div style="left:1562px;top:893px;width:278px;height:77px;background:#fff"></div>
<div style="left:1578px;top:905px;font:16px/22px 'Liberation Sans','Noto Sans CJK SC',sans-serif;color:#4a90e2">考勤</div>
<div style="left:1578px;top:931px;width:262px;height:24px;overflow:hidden;white-space:pre;font:bold 16px/24px 'Liberation Sans','Noto Sans CJK SC',sans-serif;color:#333">02:30 下班（广州兴森快捷电路科技有限公司</div>
<div style="left:1578px;top:951px;white-space:pre;font:bold 16px/22px 'Liberation Sans','Noto Sans CJK SC',sans-serif;color:#333">衡阳分公司)</div>
<div style="left:1770px;top:945px;width:70px;height:25px;background:#fff"></div>
<div style="left:1795px;top:945px;width:22px;height:25px;background:#f2f0f6"></div>
<svg width="1840" height="970" viewBox="0 0 1840 970">
<path d="M1764 947C1755 941 1743 943 1743 950C1744 957 1765 950 1764 958C1763 965 1749 966 1741 961" fill="none" stroke="#fff" stroke-width="11"/>
<path d="M1764 947C1755 941 1743 943 1743 950C1744 957 1765 950 1764 958C1763 965 1749 966 1741 961" fill="none" stroke="#ef5a24" stroke-width="7"/>
<text x="1773" y="960" font-family="Noto Sans CJK SC" font-weight="bold" font-size="18" fill="#1c7ed6">中</text>
<circle cx="1802" cy="952" r="2.500" fill="none" stroke="#ef8a50" stroke-width="1.500"/><text x="1807" y="958" font-family="Liberation Sans" font-weight="bold" font-size="14" fill="#ef8a50">,</text>
<rect x="1826" y="944" width="8" height="14" rx="4" fill="#1c7ed6"/><path d="M1823 953A7 7 0 0 0 1837 953M1830 960V964M1825 965H1835" fill="none" stroke="#1c7ed6" stroke-width="1.800"/>
</svg>
</div></body></html>
